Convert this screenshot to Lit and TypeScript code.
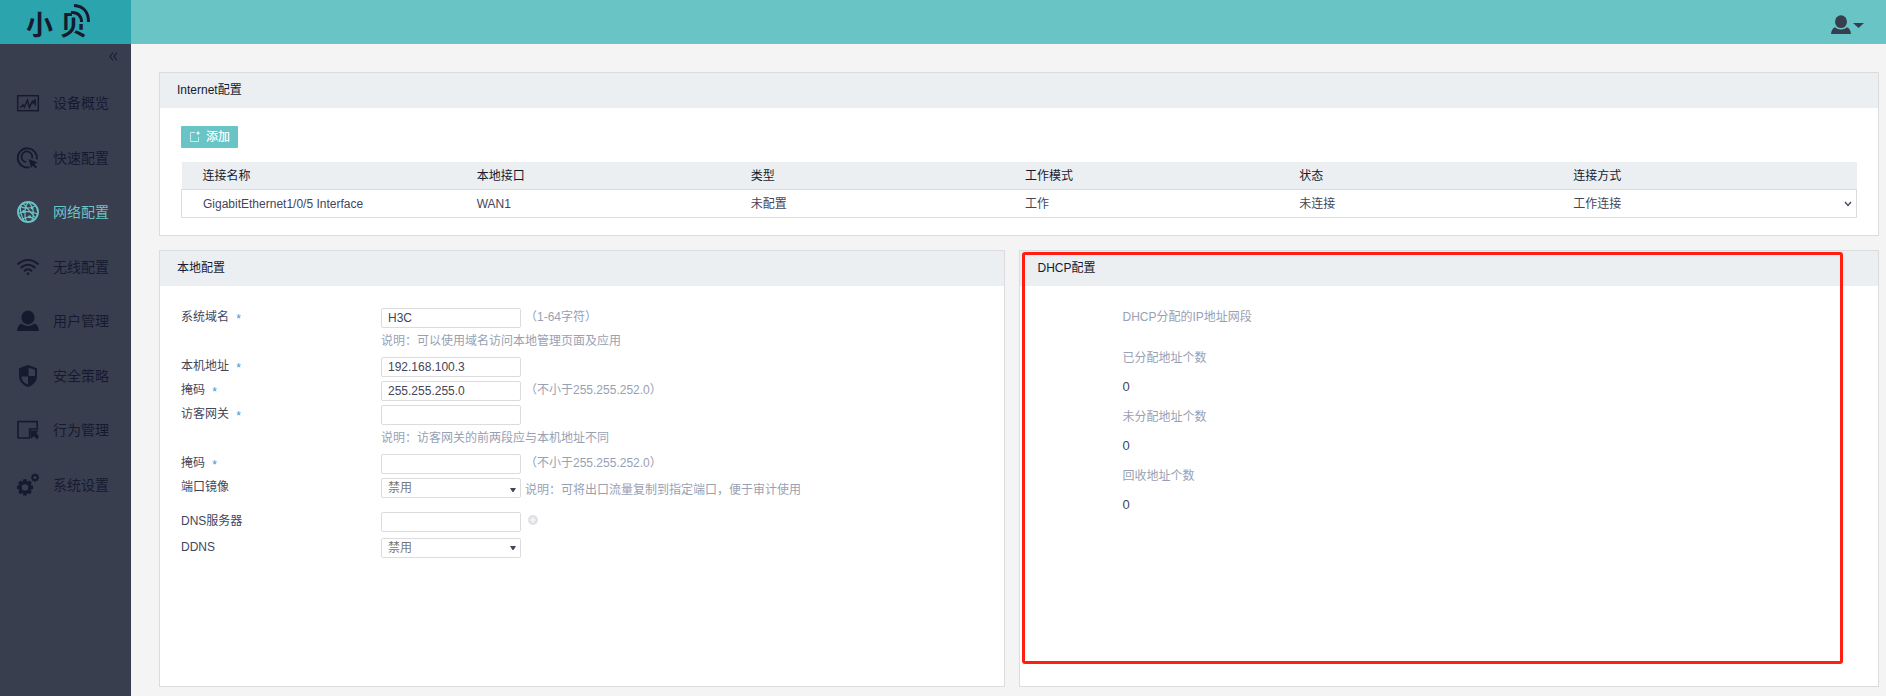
import { LitElement, html, svg, css, nothing, TemplateResult } from "lit";
import { customElement, state } from "lit/decorators.js";
import { classMap } from "lit/directives/class-map.js";

interface NavItem {
  id: string;
  label: string;
  icon: TemplateResult;
}

interface Field {
  id: string;
  label: string;
  required?: boolean;
  value?: string;
  options?: string[];
  hint?: string;
  remark?: string;
  note?: string;
  addable?: boolean;
}

const person = svg`
  <ellipse cx="11" cy="7.4" rx="6.6" ry="7"></ellipse>
  <path d="M0 21 C0.4 17 2 14.4 4.6 13.6 C6.4 15.2 8.4 16 11 16 C13.6 16 15.6 15.2 17.4 13.6 C20 14.4 21.6 17 22 21 Z"></path>`;

const gearPath = (cx: number, cy: number, outer: number, inner: number, hole: number) => {
  const pts: string[] = [];
  const teeth = 8;
  for (let i = 0; i < teeth; i++) {
    const base = (i * 2 * Math.PI) / teeth;
    for (const [offset, r] of [[-0.36, inner], [-0.2, outer], [0.2, outer], [0.36, inner]]) {
      const a = base + offset;
      pts.push(`${(cx + r * Math.cos(a)).toFixed(2)} ${(cy + r * Math.sin(a)).toFixed(2)}`);
    }
  }
  return `M${pts.join("L")}Z M${cx - hole} ${cy}a${hole} ${hole} 0 1 0 ${hole * 2} 0a${hole} ${hole} 0 1 0 ${-hole * 2} 0Z`;
};

const NAV: NavItem[] = [
  {
    id: "overview",
    label: "设备概览",
    icon: svg`<g fill="none" stroke="currentColor">
      <rect x="0.7" y="3.7" width="20.6" height="15" stroke-width="1.5"></rect>
      <path d="M3.4 15.6 L6 13 L7.4 15 L10.4 8.2 L12.4 15.4 L15.4 9.4 L16.4 11 L18.2 7.4 V13.4" stroke-width="1.5"></path></g>`,
  },
  {
    id: "quick",
    label: "快速配置",
    icon: svg`<g fill="none" stroke="currentColor">
      <path d="M12.6 20.2 A9.6 9.6 0 1 1 19.8 12.4" stroke-width="1.8"></path>
      <path d="M9 15.2 A5.4 5.4 0 1 1 15 11.6" stroke-width="1.7"></path></g>
      <path d="M11.6 12 L20.6 15.4 L17.6 17 L20 20.2 L18.4 21.6 L16 18.4 L14.2 21 Z"></path>`,
  },
  {
    id: "network",
    label: "网络配置",
    icon: svg`<g fill="none" stroke="currentColor" stroke-width="1.2">
      <circle cx="11" cy="11" r="10" stroke-width="1.8"></circle>
      <path d="M3 5 C7 8 15 7.6 18.6 4.6 M1.4 12.6 C6 9.6 15 10 20.6 13 M5 18.6 C9 15.6 14 15.8 17.6 18.4"></path>
      <path d="M11.6 1 C7.6 5 6.6 14 9.6 21 M11 1 C16.6 5 17.8 13 14.6 20.4 M3.6 5.4 C2.8 10 4.2 15 7.4 20 M6 2.4 L18 16.4"></path></g>
      <circle cx="6.6" cy="10.6" r="1.6"></circle><circle cx="15" cy="7" r="1.4"></circle><circle cx="12.6" cy="15.8" r="1.5"></circle>`,
  },
  {
    id: "wireless",
    label: "无线配置",
    icon: svg`<g fill="none" stroke="currentColor" stroke-width="2.1">
      <path d="M0.6 8.6 C6.6 2.4 15.4 2.4 21.4 8.6"></path>
      <path d="M3.8 12 C8 7.6 14 7.6 18.2 12"></path>
      <path d="M7 15.2 C9.4 12.8 12.6 12.8 15 15.2"></path></g>
      <circle cx="11" cy="17.7" r="1.3"></circle>`,
  },
  { id: "users", label: "用户管理", icon: person },
  {
    id: "security",
    label: "安全策略",
    icon: svg`<path fill-rule="evenodd" d="M11 0 L20 3.2 V11 C20 16.2 16.4 20 11 22 C5.6 20 2 16.2 2 11 V3.2 Z M11.6 2.8 V11 H18 V4.8 Z M11 11.4 H4.4 C4.6 15.2 7 18 11 19.8 Z"></path>`,
  },
  {
    id: "behavior",
    label: "行为管理",
    icon: svg`<path d="M13 19 H1 V2.6 H20.2 V10 H12.6 V19" fill="none" stroke="currentColor" stroke-width="1.6"></path>
      <path d="M13.4 11.6 H21.6 L19.4 14 L22 17.6 L20 20.4 L17 17 L14 20 Z"></path>`,
  },
  {
    id: "system",
    label: "系统设置",
    icon: svg`<path fill-rule="evenodd" d="${gearPath(8, 13.4, 8.2, 6.2, 3.2)}"></path>
      <path fill-rule="evenodd" d="${gearPath(18, 3.6, 4.2, 3.1, 1.6)}"></path>`,
  },
];

const COLUMNS = ["连接名称", "本地接口", "类型", "工作模式", "状态", "连接方式"];
const CONNECTIONS = [["GigabitEthernet1/0/5 Interface", "WAN1", "未配置", "工作", "未连接", "工作连接"]];

const FIELDS: Field[] = [
  { id: "domain", label: "系统域名", required: true, value: "H3C", hint: "（1-64字符）", note: "说明：可以使用域名访问本地管理页面及应用" },
  { id: "address", label: "本机地址", required: true, value: "192.168.100.3" },
  { id: "mask", label: "掩码", required: true, value: "255.255.255.0", hint: "（不小于255.255.252.0）" },
  { id: "guest", label: "访客网关", required: true, value: "", note: "说明：访客网关的前两段应与本机地址不同" },
  { id: "guest-mask", label: "掩码", required: true, value: "", hint: "（不小于255.255.252.0）" },
  { id: "mirror", label: "端口镜像", options: ["禁用", "启用"], remark: "说明：可将出口流量复制到指定端口，便于审计使用" },
  { id: "dns", label: "DNS服务器", value: "", addable: true },
  { id: "ddns", label: "DDNS", options: ["禁用", "启用"] },
];

const LEASES = [
  { label: "已分配地址个数", value: "0" },
  { label: "未分配地址个数", value: "0" },
  { label: "回收地址个数", value: "0" },
];

@customElement("app-root")
export class AppRoot extends LitElement {
  @state() private active = "network";

  static styles = css`
    :host {
      display: grid;
      grid-template-columns: 131px minmax(0, 1fr);
      grid-template-rows: 44px 1fr;
      min-height: 100vh;
      background: #f4f4f4;
      color: #43465a;
      font: 12px/18px "Liberation Sans", "Noto Sans CJK SC", sans-serif;
    }
    *, *::before { box-sizing: border-box; }
    button { border: 0; padding: 0; background: none; color: inherit; font: inherit; cursor: pointer; }
    svg { display: block; fill: currentColor; }

    .brand { background: #2ba4ae; color: #161a2f; }
    .brand-name { font: 700 27px "Noto Sans CJK SC", sans-serif; }
    .topbar { display: flex; align-items: center; justify-content: flex-end; padding: 6px 22px 0 0; background: #69c4c5; }
    .account { display: flex; align-items: center; gap: 2px; color: #393e4f; }

    .sidebar { background: #393e4f; color: #161a2f; }
    .collapse { display: block; width: 14px; height: 24px; margin: 0 11px 8px auto; }
    .collapse svg { margin: auto; }
    .menu { display: flex; flex-direction: column; min-height: 436px; margin: 0; padding: 0; list-style: none; }
    .menu-item { display: flex; flex: 1; }
    .menu-link { display: flex; flex: 1; align-items: center; gap: 14px; padding-left: 17px; color: inherit; font-size: 14px; text-decoration: none; }
    .menu-link svg { overflow: visible; }
    .menu-link.active { color: #69c4c5; }

    .content { display: flex; flex-direction: column; gap: 14px; padding: 28px 7px 9px 28px; }
    .panel { position: relative; border: 1px solid #dcdcde; background: #fff; }
    .panel-title { margin: 0; padding: 0 17px; background: #ebeff2; color: #161a2f; font-size: 12px; font-weight: 400; line-height: 35px; }
    .internet-body { padding: 18px 21px 17px; }
    .add { display: flex; align-items: center; gap: 5px; height: 22px; margin-bottom: 14px; padding: 0 8px; border-radius: 1px; background: #69c4c5; color: #fff; font-weight: 500; }

    .grid { width: 100%; border-collapse: collapse; table-layout: fixed; text-align: left; }
    .grid th, .grid td { padding: 2px 0 0 21px; font-weight: 400; }
    .grid th { height: 27px; background: #ebeff2; color: #161a2f; }
    .grid td { height: 28px; }
    .grid tbody tr { border: 1px solid #dcdcde; }
    .grid .expand { width: 30px; padding: 2px 4px 0 0; }
    .expand button { display: block; margin-left: auto; }

    .columns { display: grid; flex: 1; grid-template-columns: minmax(0, 846fr) minmax(0, 859fr); gap: 14px; }
    .form { padding: 22px 21px; }
    .field { display: grid; grid-template-columns: 200px minmax(0, 1fr); min-height: 24px; }
    .field.noted { min-height: 49px; }
    .field.remarked { min-height: 34px; }
    .field.addable { min-height: 26px; }
    .required { margin-left: 4px; color: #3c97d3; vertical-align: -2px; }
    .control { display: flex; flex-wrap: wrap; align-content: flex-start; column-gap: 4px; row-gap: 4px; }
    .box { width: 140px; height: 20px; margin: 0; padding: 0 6px; border: 1px solid #dcdcde; border-radius: 2px; background: #fff; color: #43465a; font: inherit; }
    select.box { appearance: none; color: #777; }
    .picker { display: grid; }
    .picker .box, .picker svg { grid-area: 1 / 1; }
    .picker svg { place-self: center end; margin-right: 5px; pointer-events: none; }
    .hint, .note, .remark { color: #98a1b4; }
    .remark { line-height: 24px; }
    .note { flex-basis: 100%; }
    .more { height: 16px; margin-left: 3px; color: #dfe1e5; }

    .leases { margin: 0; padding: 22px 17px 22px 102px; }
    .lease-range { margin-bottom: 23px; color: #98a1b4; }
    .lease-label { color: #98a1b4; }
    .lease-value { margin: 11px 0 12px; font-size: 13px; }
    .highlight { position: absolute; inset: 1px 35px 22px 2px; border: 3px solid #ff1f12; border-radius: 3px; pointer-events: none; }
  `;

  private renderControl(f: Field) {
    if (f.options) {
      return html`<span class="picker">
        <select class="box" id=${f.id}>${f.options.map((o) => html`<option>${o}</option>`)}</select>
        <svg width="6" height="4" viewBox="0 0 6 4" aria-hidden="true"><path d="M0 0H6L3.5 4H2.5Z"></path></svg>
      </span>`;
    }
    return html`<input class="box" id=${f.id} type="text" .value=${f.value ?? ""} />`;
  }

  private renderField(f: Field) {
    const classes = { field: true, noted: !!f.note, remarked: !!f.remark, addable: !!f.addable };
    return html`<div class=${classMap(classes)}>
      <label for=${f.id}>${f.label} ${f.required ? html`<span class="required">*</span>` : nothing}</label>
      <div class="control">
        ${this.renderControl(f)}
        ${f.hint ? html`<span class="hint">${f.hint}</span>` : nothing}
        ${f.remark ? html`<span class="remark">${f.remark}</span>` : nothing}
        ${f.note ? html`<span class="note">${f.note}</span>` : nothing}
        ${f.addable
          ? html`<button class="more" type="button" aria-label="添加DNS服务器">
              <svg width="10" height="16" viewBox="0 0 10 16"><circle cx="5" cy="8" r="5"></circle><path d="M2 8H8M5 5V11" stroke="#fff" stroke-width="1"></path></svg>
            </button>`
          : nothing}
      </div>
    </div>`;
  }

  render() {
    return html`
      <div class="brand">
        <svg width="131" height="44" viewBox="0 0 131 44" role="img" aria-label="小贝">
          <text class="brand-name" x="26" y="35">小</text>
          <text class="brand-name" x="60" y="35">贝</text>
          <path fill="#2ba4ae" d="M72 7 H90 V24 H78 C78 20 76 17 72 16 Z"></path>
          <g fill="none" stroke="currentColor" stroke-width="3">
            <path d="M71 12.5 C78 12 81.5 16 81.5 22"></path>
            <path d="M74 5.5 C84 6 88.5 13 88.5 22"></path>
          </g>
        </svg>
      </div>
      <header class="topbar">
        <button class="account" type="button" aria-label="账户">
          <svg width="20" height="20" viewBox="0 0 22 22">${person}</svg>
          <svg width="11" height="6" viewBox="0 0 11 6"><path d="M0 1H11L5.5 6Z"></path></svg>
        </button>
      </header>

      <nav class="sidebar">
        <button class="collapse" type="button" aria-label="收起菜单">
          <svg width="9" height="9" viewBox="0 0 9 9"><path d="M4 0.5L1 4.5L4 8.5M8 0.5L5 4.5L8 8.5" fill="none" stroke="currentColor" stroke-width="1.1"></path></svg>
        </button>
        <ul class="menu">
          ${NAV.map((n) => html`<li class="menu-item">
            <a class=${classMap({ "menu-link": true, active: n.id === this.active })} href="#${n.id}" @click=${() => (this.active = n.id)}>
              <svg width="22" height="22" viewBox="0 0 22 22" aria-hidden="true">${n.icon}</svg>${n.label}
            </a>
          </li>`)}
        </ul>
      </nav>

      <main class="content">
        <section class="panel">
          <h2 class="panel-title">Internet配置</h2>
          <div class="internet-body">
            <button class="add" type="button">
              <svg width="12" height="12" viewBox="0 0 12 12" aria-hidden="true">
                <path d="M6 1.5H1.5V10.5H9.5V6" fill="none" stroke="#cdebec" stroke-width="1"></path>
                <path d="M9 0L9.8 1.4L11.4 2L9.8 2.8L9 4.4L8.2 2.8L6.8 2L8.2 1.4Z"></path>
              </svg>添加
            </button>
            <table class="grid">
              <thead><tr>${COLUMNS.map((c) => html`<th scope="col">${c}</th>`)}<th class="expand"></th></tr></thead>
              <tbody>
                ${CONNECTIONS.map((row) => html`<tr>${row.map((c) => html`<td>${c}</td>`)}
                  <td class="expand"><button type="button" aria-label="展开">
                    <svg width="8" height="6" viewBox="0 0 8 6"><path d="M1 1L4 4.5L7 1" fill="none" stroke="currentColor" stroke-width="1.3"></path></svg>
                  </button></td></tr>`)}
              </tbody>
            </table>
          </div>
        </section>

        <div class="columns">
          <section class="panel">
            <h2 class="panel-title">本地配置</h2>
            <form class="form">${FIELDS.map((f) => this.renderField(f))}</form>
          </section>
          <section class="panel">
            <h2 class="panel-title">DHCP配置</h2>
            <dl class="leases">
              <dt class="lease-range">DHCP分配的IP地址网段</dt>
              ${LEASES.map((l) => html`<dt class="lease-label">${l.label}</dt><dd class="lease-value">${l.value}</dd>`)}
            </dl>
            <div class="highlight"></div>
          </section>
        </div>
      </main>
    `;
  }
}
